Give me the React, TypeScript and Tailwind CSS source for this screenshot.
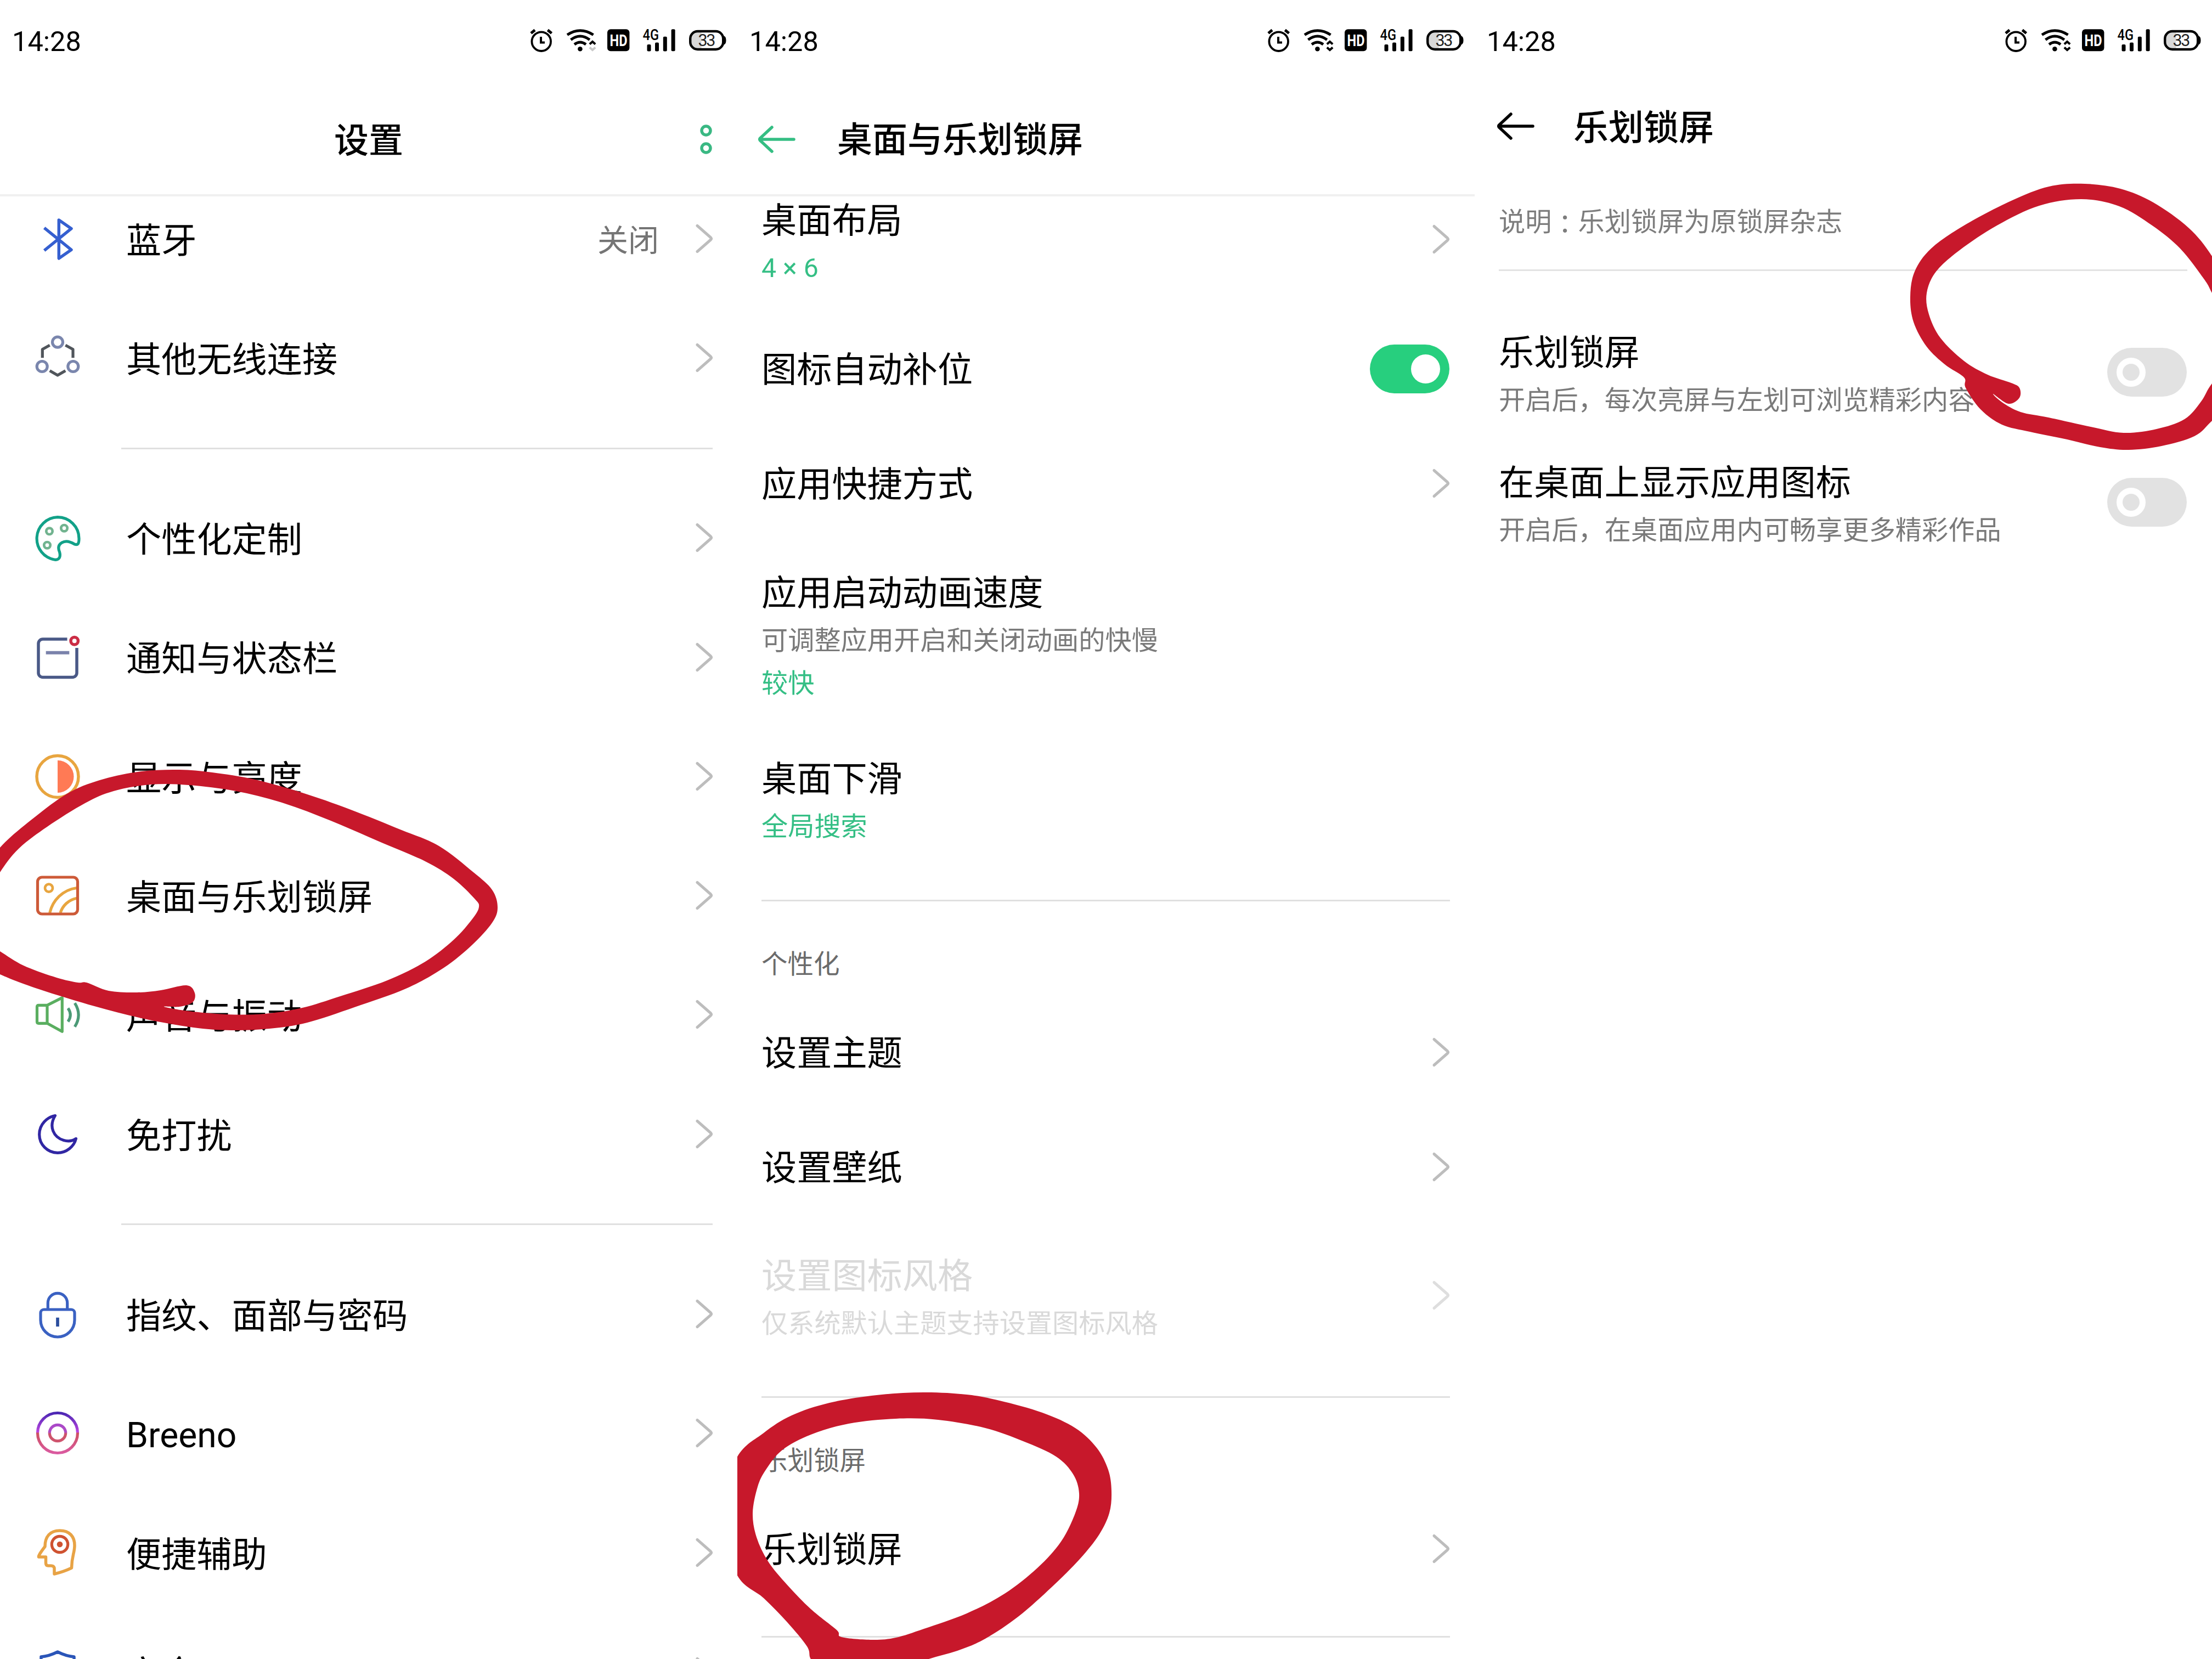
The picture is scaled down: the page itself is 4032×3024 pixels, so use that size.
import React from "react";
import type { ReactNode } from "react";

type Point = [number, number];

/* ---------- status bar ---------- */

function StatusIcons({ downActive = true }: { downActive?: boolean }) {
  return (
    <svg className="h-[60px] w-[376px]" viewBox="0 0 376 60" fill="none">
      {/* alarm */}
      <g stroke="#000">
        <circle cx="26.7" cy="30.7" r="17.3" strokeWidth="3.8" />
        <path d="M7.9 15.6L15 9.8M38.3 9.8L45.5 15.6" strokeWidth="5" />
        <path d="M26 22V32.5H33" strokeWidth="4" />
      </g>
      {/* wifi */}
      <g stroke="#000" strokeWidth="5">
        <path d="M74 18.5Q97.5 3 121.5 18.5" />
        <path d="M80.5 27.5Q97.5 14.5 114.8 27.5" />
        <path d="M87 36Q97.5 28 108 36" />
        <path d="M114.8 35.5L120 31L125.2 35.5" strokeWidth="4" />
        <path
          d="M114.8 41.5L120 46L125.2 41.5"
          strokeWidth="4"
          stroke={downActive ? "#000" : "#c9c9c9"}
        />
      </g>
      <circle cx="97.4" cy="44.3" r="4.3" fill="#000" />
      {/* HD */}
      <rect x="147" y="8.3" width="40.4" height="40" rx="6" fill="#000" />
      <text x="151.5" y="39.2" fontSize="30" fontWeight="700" fill="#fff" textLength="32" lengthAdjust="spacingAndGlyphs">
        HD
      </text>
      {/* signal */}
      <text x="211.5" y="28" fontSize="27" fontWeight="500" fill="#000" textLength="29.5" lengthAdjust="spacingAndGlyphs">
        4G
      </text>
      <g fill="#000">
        <rect x="219.5" y="36" width="7" height="12.4" rx="2" />
        <rect x="234" y="32.5" width="7" height="15.9" rx="2" />
        <rect x="248.8" y="21.7" width="7" height="26.7" rx="2" />
        <rect x="263.6" y="8.3" width="7" height="40" rx="2" />
      </g>
      {/* battery */}
      <path d="M318.5 12H311a13 13 0 0 0-13 13v7a13 13 0 0 0 13 13h7.500z" fill="#d8d8d8" />
      <rect x="298.2" y="12" width="60" height="33" rx="13.5" stroke="#000" strokeWidth="4.4" />
      <path d="M359 20.500Q363.500 21 363.500 28.500T359 36.500Z" fill="#000" />
      <text x="312.500" y="38.600" fontSize="30.500" fill="#222" textLength="32" lengthAdjust="spacing">
        33
      </text>
    </svg>
  );
}

function StatusBar({ downActive }: { downActive?: boolean }) {
  return (
    <div className="flex h-[150px] shrink-0 items-center justify-between pr-2 pl-[22px]">
      <span className="pt-[2px] text-[50.5px] leading-none text-black">14:28</span>
      <StatusIcons downActive={downActive} />
    </div>
  );
}

/* ---------- small parts ---------- */

function Chevron({ faded = false }: { faded?: boolean }) {
  return (
    <svg
      className="h-[60px] w-[36px] shrink-0"
      viewBox="0 0 36 60"
      fill="none"
      stroke={faded ? "#dedede" : "#bdbdbd"}
      strokeWidth="5"
      strokeLinecap="round"
      strokeLinejoin="round"
    >
      <path d="M5 5.500L29.500 27Q31.500 29 29.500 31L5 52.500" />
    </svg>
  );
}

function BackArrow({ color }: { color: string }) {
  return (
    <svg className="h-[60px] w-[72px]" viewBox="0 0 72 60" fill="none" stroke={color} strokeWidth="5.500" strokeLinecap="round">
      <path d="M27 8L5.500 28Q4 30 5.500 32L27 52M6 30H67" />
    </svg>
  );
}

function Toggle({ on = false }: { on?: boolean }) {
  return on ? (
    <div className="flex h-[89px] w-[145px] shrink-0 items-center justify-end rounded-full bg-[#27cf7e] pr-[17px]">
      <div className="size-[53px] rounded-full bg-white" />
    </div>
  ) : (
    <div className="flex h-[89px] w-[145px] shrink-0 items-center rounded-full bg-[#e2e2e2] pl-[17px]">
      <div className="size-[53px] rounded-full border-[11px] border-white" />
    </div>
  );
}

function Separator({ inset }: { inset: string }) {
  return (
    <div className={"flex h-[111px] shrink-0 items-center pr-[45px] " + inset}>
      <div className="h-[3px] w-full bg-[#e0e0e0]" />
    </div>
  );
}

// closed Catmull-Rom curve through the points
function inkPath(points: Point[]) {
  const n = points.length;
  let d = `M${points[0][0]} ${points[0][1]}`;
  for (let i = 0; i < n; i++) {
    const p0 = points[(i - 1 + n) % n];
    const p1 = points[i];
    const p2 = points[(i + 1) % n];
    const p3 = points[(i + 2) % n];
    d += `C${p1[0] + (p2[0] - p0[0]) / 6} ${p1[1] + (p2[1] - p0[1]) / 6} `;
    d += `${p2[0] - (p3[0] - p1[0]) / 6} ${p2[1] - (p3[1] - p1[1]) / 6} ${p2[0]} ${p2[1]}`;
  }
  return d + "Z";
}

function Ink({ viewBox, shapes }: { viewBox: string; shapes: Point[][] }) {
  return (
    <svg className="pointer-events-none absolute inset-0 h-full w-full" viewBox={viewBox}>
      <path d={shapes.map(inkPath).join("")} fill="#c7182b" fillRule="evenodd" />
    </svg>
  );
}

/* ---------- settings icons ---------- */

const icons: Record<string, ReactNode> = {
  bluetooth: (
    <path d="M24.700 27.300L74 67.300L51.300 83V13L74 28.700L24.700 68.700" stroke="#355fd0" strokeWidth="5.500" />
  ),
  wireless: (
    <>
      <g stroke="#7a86ad">
        <circle cx="49" cy="18.700" r="9.500" />
        <circle cx="20.700" cy="63" r="9.500" />
        <circle cx="77.300" cy="63" r="9.500" />
      </g>
      <path
        d="M34.700 24.300L21.300 31.700V47.300M63.300 24.300L77 31.700V47.300M34.700 70.700L49 79L63.300 70.700"
        stroke="#50555b"
      />
    </>
  ),
  palette: (
    <>
      <path
        d="M49 9.700A39 39 0 0 1 88 48.700C88 58 86 61 80 59C70 53 62 53 57 56C50 60 49.500 66 52.500 73C55 82 52 88 44 87.200A39 39 0 0 1 49 9.700Z"
        stroke="#12a188"
      />
      <g stroke="#71b38f" strokeWidth="4.700">
        <circle cx="34" cy="35.300" r="5.700" />
        <circle cx="61" cy="29.700" r="5.700" />
        <circle cx="30" cy="60.700" r="5.700" />
      </g>
    </>
  ),
  notification: (
    <>
      <path d="M66.500 14H22a8 8 0 0 0-8 8V75.500a8 8 0 0 0 8 8H76a8 8 0 0 0 8-8V30" stroke="#4a5987" strokeWidth="5.500" />
      <path d="M27.700 38.700H70.300" stroke="#7a82ab" strokeWidth="6" />
      <circle cx="79.700" cy="17.300" r="6.700" stroke="#cb2d45" strokeWidth="5.500" />
    </>
  ),
  display: (
    <>
      <circle cx="49" cy="47.500" r="38" stroke="#e8a53f" strokeWidth="5.500" />
      <path d="M49 18A29.500 29.500 0 0 1 49 77Z" fill="#ff7a55" />
    </>
  ),
  desktop: (
    <>
      <path d="M34.700 79C40 56 58 37 84 33.500M54 79C58 66 69 55 84 52.300" stroke="#e8a53f" />
      <circle cx="33" cy="33.700" r="7" stroke="#e8a53f" strokeWidth="4.700" />
      <rect x="12.500" y="14" width="73" height="67" rx="8" stroke="#cd5a38" />
    </>
  ),
  sound: (
    <>
      <path d="M30 30.300H14.500Q11.500 30.300 11.500 33.300V60.300Q11.500 63.300 14.500 63.300H30L57.300 78.200V16.700L30 30.300V63.300" stroke="#5aae60" />
      <path d="M68 35.700Q76.500 48 68 60.300M80.300 26.300Q94 48 80.300 69.700" stroke="#4b9a76" />
    </>
  ),
  moon: (
    <path
      d="M44.500 13.500C30 16.500 15.700 29 15.700 47.700A33.300 33.300 0 0 0 49 81.300C65 81.300 79 70 82.500 55.500C76 60 67 60.500 60 58.500C42 53 32 34 44.500 13.500Z"
      stroke="#3026a3"
    />
  ),
  lock: (
    <>
      <path d="M31.300 39V27a17.700 17.700 0 0 1 35.400 0V39M18 45a6 6 0 0 1 6-6H74a6 6 0 0 1 6 6V58A31 31 0 0 1 18 58Z" stroke="#3a61c2" />
      <path d="M49 53.700V70" stroke="#2a4d9e" strokeWidth="5.700" />
    </>
  ),
  breeno: (
    <>
      <defs>
        <linearGradient id="ring" gradientUnits="userSpaceOnUse" x1="0" y1="8" x2="0" y2="86">
          <stop offset="0" stopColor="#4425b0" />
          <stop offset="0.480" stopColor="#bb45e0" />
          <stop offset="0.500" stopColor="#cd5060" />
          <stop offset="1" stopColor="#db5ba4" />
        </linearGradient>
        <linearGradient id="core" gradientUnits="userSpaceOnUse" x1="0" y1="30" x2="0" y2="64">
          <stop offset="0" stopColor="#a948c9" />
          <stop offset="0.450" stopColor="#b04cc4" />
          <stop offset="0.550" stopColor="#cd5468" />
          <stop offset="1" stopColor="#cf5570" />
        </linearGradient>
      </defs>
      <circle cx="49" cy="47" r="36.500" stroke="url(#ring)" />
      <circle cx="49" cy="47" r="14.700" stroke="url(#core)" />
    </>
  ),
  assist: (
    <>
      <path
        d="M43 86V75Q42 71 37 71H32Q27.500 71 27.500 66V55H14.500Q13 53 26 36C26 18 35 7 53 7C71 7 80 18 80 34C80 48 75 52 74.500 75Q60 82 43 86Z"
        stroke="#e8a345"
        strokeWidth="5.500"
      />
      <circle cx="53" cy="32" r="14.700" stroke="#cf5230" />
      <circle cx="53" cy="32" r="5.300" fill="#cf5230" />
    </>
  ),
  shield: <path d="M49 11Q33 19 19 20V50Q19 72 49 86Q79 72 79 50V20Q65 19 49 11Z" stroke="#2a55b8" strokeWidth="5.500" />,
};

function SettingsRow({ icon, label, value }: { icon: string; label: string; value?: string }) {
  return (
    <div className="flex h-[217.3px] shrink-0 items-center pr-[42px] pl-14">
      <svg className="size-24" viewBox="0 0 96 96" fill="none" strokeWidth="5.200" strokeLinejoin="round">
        {icons[icon]}
      </svg>
      <span className="ml-[78px] flex-1 pt-[6px] text-[64.2px] leading-none text-black">{label}</span>
      {value && <span className="mr-[65px] pt-[6px] text-[56px] leading-none text-[#757575]">{value}</span>}
      <Chevron />
    </div>
  );
}

/* ---------- first screen ---------- */

const leftInk: Point[][] = [
  [
    [-30, 1600], [0, 1545], [69, 1485], [129, 1443], [189, 1420], [258, 1406], [327, 1403], [387, 1408], [465, 1421],
    [551, 1445], [637, 1475], [732, 1513], [800, 1542], [863, 1590], [897, 1622], [907, 1654], [897, 1682],
    [861, 1722], [809, 1764], [740, 1802], [646, 1836], [560, 1864], [491, 1875], [422, 1878], [353, 1873],
    [258, 1856], [172, 1834], [86, 1808], [34, 1790], [0, 1776], [-30, 1762], [-30, 1715], [0, 1734], [43, 1760],
    [103, 1782], [142, 1791], [158, 1791], [198, 1806], [250, 1809], [293, 1805], [340, 1796], [355, 1810],
    [351, 1827], [327, 1835], [299, 1835], [344, 1843], [413, 1849], [482, 1848], [551, 1837], [620, 1816],
    [706, 1787], [775, 1753], [827, 1713], [861, 1675], [873, 1653], [865, 1638], [827, 1602], [775, 1570],
    [689, 1533], [603, 1496], [517, 1464], [430, 1442], [344, 1431], [275, 1430], [207, 1442], [155, 1464],
    [86, 1507], [34, 1547], [0, 1590], [-20, 1630],
  ],
];

function SettingsScreen() {
  return (
    <section className="relative flex h-full w-[1344px] flex-col overflow-hidden">
      <StatusBar downActive={false} />
      <header className="grid h-[208px] shrink-0 grid-cols-3 items-center border-b-4 border-[#f0f0f0]">
        <h1 className="col-start-2 pt-[8px] text-center text-[63px] leading-none font-medium text-black">设置</h1>
        <svg className="mt-[4px] mr-[43px] h-[60px] w-7 justify-self-end" viewBox="0 0 28 60" fill="none" stroke="#3ab883" strokeWidth="5.500">
          <circle cx="14" cy="14" r="8" />
          <circle cx="14" cy="46" r="8" />
        </svg>
      </header>
      <main className="flex flex-1 flex-col overflow-hidden">
        <div className="-mt-[31px] flex flex-col">
          <SettingsRow icon="bluetooth" label="蓝牙" value="关闭" />
          <SettingsRow icon="wireless" label="其他无线连接" />
          <Separator inset="pl-[221px]" />
          <SettingsRow icon="palette" label="个性化定制" />
          <SettingsRow icon="notification" label="通知与状态栏" />
          <SettingsRow icon="display" label="显示与亮度" />
          <SettingsRow icon="desktop" label="桌面与乐划锁屏" />
          <SettingsRow icon="sound" label="声音与振动" />
          <SettingsRow icon="moon" label="免打扰" />
          <Separator inset="pl-[221px]" />
          <SettingsRow icon="lock" label="指纹、面部与密码" />
          <SettingsRow icon="breeno" label="Breeno" />
          <SettingsRow icon="assist" label="便捷辅助" />
          <SettingsRow icon="shield" label="安全" />
        </div>
      </main>
      <Ink viewBox="0 0 1344 3024" shapes={leftInk} />
    </section>
  );
}

/* ---------- second screen ---------- */

type RowProps = {
  title: string;
  hint?: string;
  state?: string;
  faded?: boolean;
  height: string;
  right?: ReactNode;
};

function Row({ title, hint, state, faded, height, right }: RowProps) {
  return (
    <div className={"flex shrink-0 items-center justify-between pl-11 " + height}>
      <div className={"flex flex-col " + (hint || state ? "pt-[7px]" : "pt-[3px]")}>
        <span className={"text-[64.2px] leading-[96px] " + (faded ? "text-[#d9d9d9]" : "text-black")}>{title}</span>
        {hint && (
          <span className={"text-[48.2px] leading-[78px] " + (faded ? "text-[#d9d9d9]" : "text-[#7a7a7a]")}>{hint}</span>
        )}
        {state && <span className="text-[48.2px] leading-[78px] text-[#35bf85]">{state}</span>}
      </div>
      {right}
    </div>
  );
}

function Arrow({ faded }: { faded?: boolean }) {
  return (
    <div className="flex pr-[43px]">
      <Chevron faded={faded} />
    </div>
  );
}

function Category({ label }: { label: string }) {
  return <div className="flex h-[117px] shrink-0 items-center pt-1.5 pl-11 text-[47.5px] leading-none text-[#6b6b6b]">{label}</div>;
}

const middleInk: Point[][] = [
  [
    [1310, 2760], [1343, 2657], [1392, 2612], [1443, 2580], [1512, 2557], [1598, 2543], [1684, 2538], [1762, 2542],
    [1822, 2553], [1900, 2575], [1960, 2603], [1999, 2639], [2020, 2679], [2026, 2718], [2022, 2758], [2003, 2798],
    [1968, 2842], [1917, 2893], [1857, 2946], [1796, 2987], [1745, 3009], [1693, 3024], [1640, 3045], [1500, 3045],
    [1478, 3024], [1471, 3001], [1435, 2957], [1392, 2913], [1343, 2870],
  ],
  [
    [1372, 2758], [1381, 2710], [1396, 2679], [1426, 2643], [1478, 2615], [1547, 2595], [1633, 2586], [1710, 2588],
    [1796, 2603], [1865, 2627], [1925, 2655], [1956, 2687], [1967, 2722], [1960, 2758], [1934, 2810], [1891, 2858],
    [1831, 2905], [1762, 2941], [1684, 2969], [1633, 2985], [1590, 2989], [1534, 2984], [1525, 2971], [1478, 2933],
    [1435, 2889], [1400, 2846], [1379, 2802],
  ],
];

function DesktopScreen() {
  return (
    <section className="relative flex h-full w-[1344px] flex-col overflow-hidden">
      <StatusBar />
      <header className="flex h-[208px] shrink-0 items-center border-b-4 border-[#f0f0f0] pt-[4px] pl-[36px]">
        <BackArrow color="#35be83" />
        <h1 className="ml-[74px] pt-[4px] text-[64px] leading-none font-medium text-black">桌面与乐划锁屏</h1>
      </header>
      <main className="flex flex-1 flex-col overflow-hidden">
        <div className="-mt-[52px] flex flex-col">
          <Row title="桌面布局" state="4 × 6" height="h-[262px]" right={<Arrow />} />
          <Row
            title="图标自动补位"
            height="h-[209px]"
            right={
              <div className="pr-[46px]">
                <Toggle on />
              </div>
            }
          />
          <Row title="应用快捷方式" height="h-[209px]" right={<Arrow />} />
          <Row title="应用启动动画速度" hint="可调整应用开启和关闭动画的快慢" state="较快" height="h-[339px]" />
          <Row title="桌面下滑" state="全局搜索" height="h-[261px]" />
          <Separator inset="pl-11" />
          <Category label="个性化" />
          <Row title="设置主题" height="h-[209px]" right={<Arrow />} />
          <Row title="设置壁纸" height="h-[209px]" right={<Arrow />} />
          <Row
            title="设置图标风格"
            hint="仅系统默认主题支持设置图标风格"
            faded
            height="h-[259px]"
            right={<Arrow faded />}
          />
          <Separator inset="pl-11" />
          <Category label="乐划锁屏" />
          <Row title="乐划锁屏" height="h-[209px]" right={<Arrow />} />
          <Separator inset="pl-11" />
        </div>
      </main>
      <Ink viewBox="1344 0 1344 3024" shapes={middleInk} />
    </section>
  );
}

/* ---------- third screen ---------- */

const rightInk: Point[][] = [
  [
    [4070, 540], [4032, 467], [3989, 415], [3925, 369], [3865, 344], [3800, 335], [3735, 340], [3666, 366],
    [3580, 411], [3520, 453], [3490, 495], [3482, 541], [3488, 587], [3512, 632], [3546, 665], [3580, 688],
    [3583, 707], [3610, 746], [3649, 774], [3700, 787], [3768, 801], [3828, 815], [3880, 820], [3940, 813],
    [4000, 795], [4032, 767], [4070, 730], [4070, 660], [4032, 699], [4012, 732], [3982, 764], [3931, 782],
    [3871, 789], [3811, 778], [3734, 761], [3683, 751], [3649, 733], [3633, 718], [3661, 736], [3681, 725],
    [3681, 707], [3666, 698], [3623, 683], [3580, 658], [3537, 616], [3516, 573], [3512, 534], [3529, 495],
    [3572, 456], [3640, 411], [3717, 375], [3794, 363], [3863, 376], [3923, 411], [3974, 453], [4017, 508],
    [4032, 534], [4060, 591],
  ],
];

function LockScreen() {
  const toggle = (
    <div className="pr-[46px]">
      <Toggle />
    </div>
  );
  return (
    <section className="relative flex h-full w-[1344px] flex-col overflow-hidden">
      <StatusBar />
      <header className="flex h-[160px] shrink-0 items-center pl-[39px]">
        <BackArrow color="#000" />
        <h1 className="ml-[69px] pt-[8px] text-[64px] leading-none font-medium text-black">乐划锁屏</h1>
      </header>
      <p className="flex h-[181px] shrink-0 items-center pt-[10px] pl-11 text-[48.2px] leading-none text-[#7d7d7d]">
        说明
        {/* centred colon */}
        <span lang="zh-TW" className="font-['Noto_Sans_CJK_TC']">
          ：
        </span>
        乐划锁屏为原锁屏杂志
      </p>
      <div className="mr-[45px] ml-11 h-[3px] shrink-0 bg-[#e3e3e3]" />
      <main className="mt-[66px] flex flex-col">
        <Row title="乐划锁屏" hint="开启后，每次亮屏与左划可浏览精彩内容" height="h-[237px]" right={toggle} />
        <Row title="在桌面上显示应用图标" hint="开启后，在桌面应用内可畅享更多精彩作品" height="h-[237px]" right={toggle} />
      </main>
      <Ink viewBox="2688 0 1344 3024" shapes={rightInk} />
    </section>
  );
}

function App() {
  return (
    <div
      lang="zh-CN"
      className="flex h-[3024px] w-[4032px] overflow-hidden bg-white font-['Roboto','Noto_Sans_CJK_SC',sans-serif]"
    >
      <SettingsScreen />
      <DesktopScreen />
      <LockScreen />
    </div>
  );
}

export default App;
